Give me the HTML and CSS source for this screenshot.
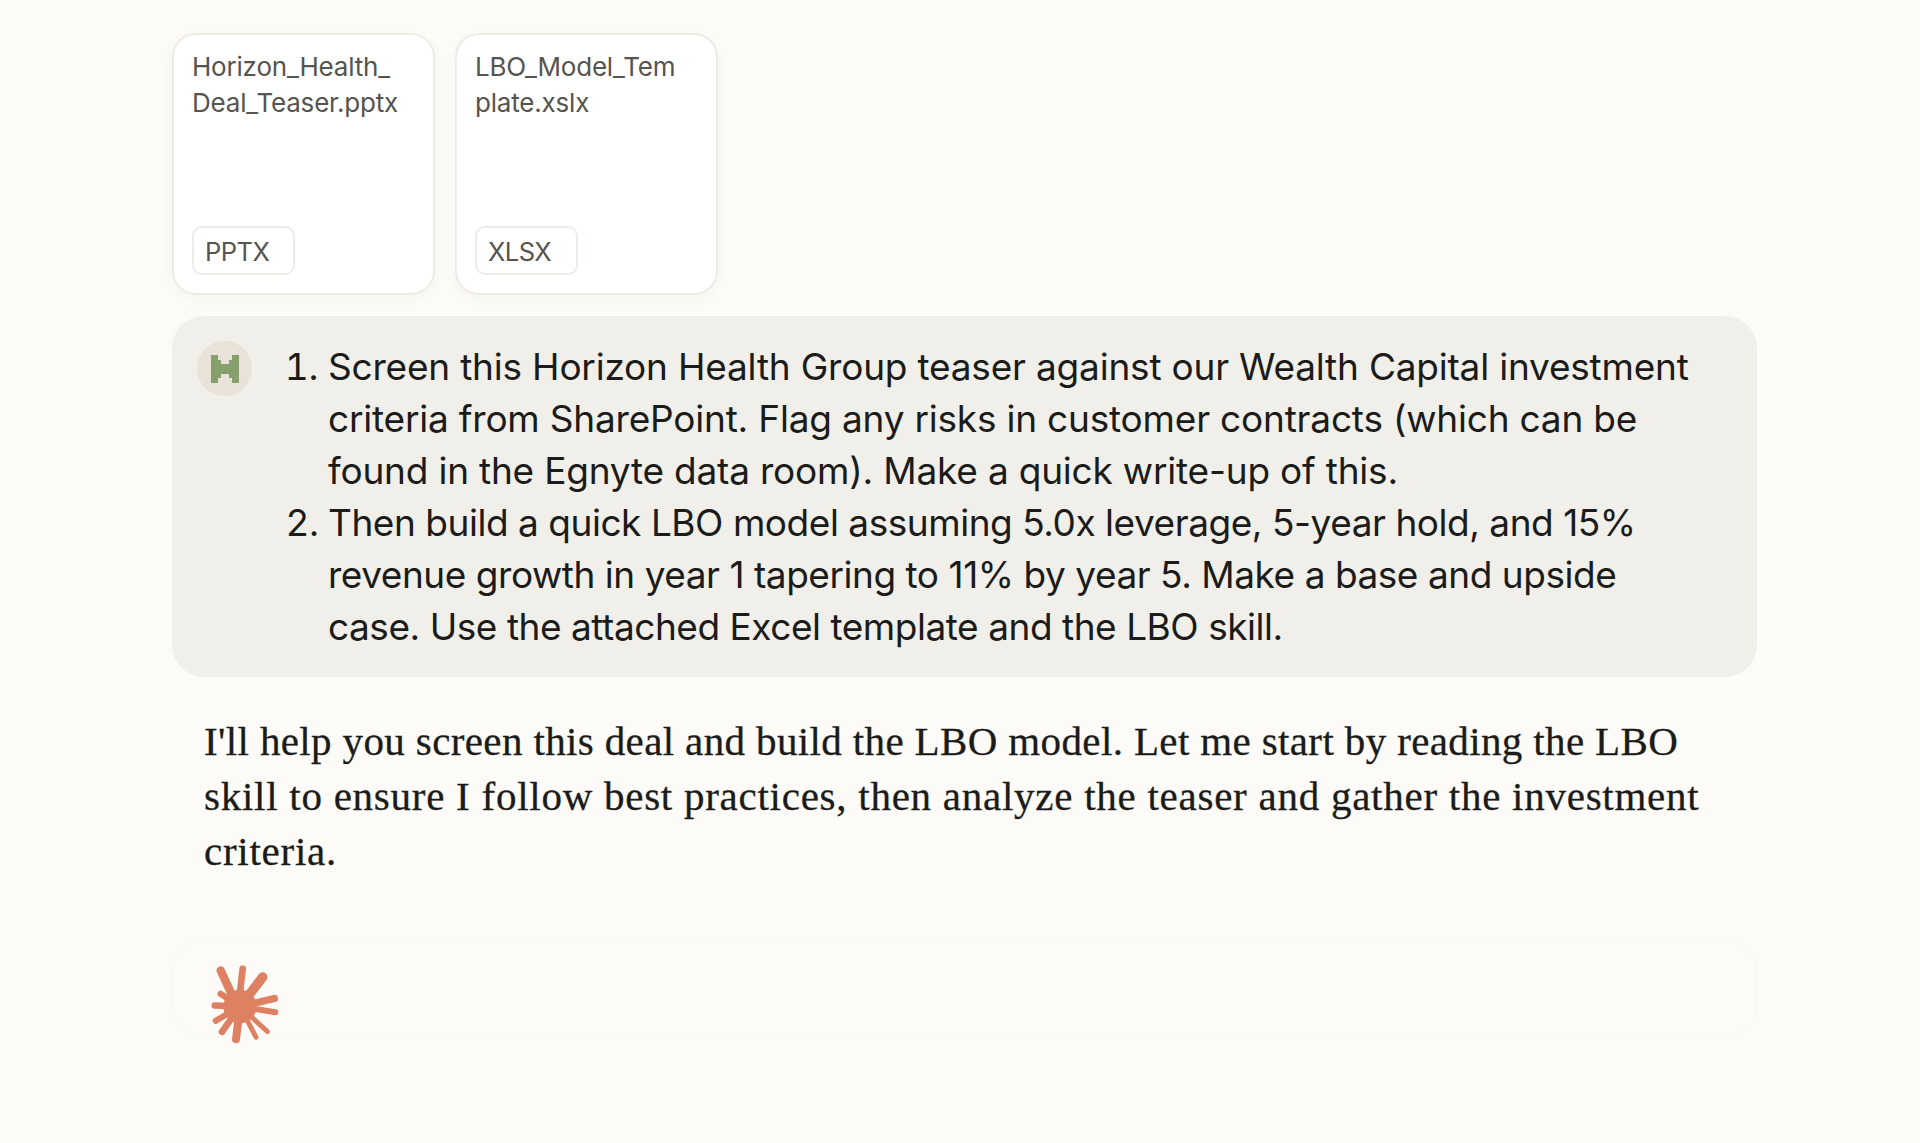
FILE: index.html
```html
<!DOCTYPE html>
<html lang="en">
<head>
<meta charset="utf-8">
<title>Deal screening</title>
<link rel="stylesheet" href="styles.css">
</head>
<body>
<main class="thread">
  <div class="attachments">
    <div class="file-card">
      <div class="file-name">Horizon_Health_<br>Deal_Teaser.pptx</div>
      <span class="file-tag">PPTX</span>
    </div>
    <div class="file-card">
      <div class="file-name">LBO_Model_Tem<br>plate.xslx</div>
      <span class="file-tag">XLSX</span>
    </div>
  </div>
  <section class="user-bubble">
    <div class="avatar">
      <svg class="avatar-icon" viewBox="0 0 28 28"><path d="M0 0h7v5h3v4h8V5h3V0h7v28h-7v-5h-3v-4h-8v4H7v5H0z"/></svg>
    </div>
    <ol class="prompt">
      <li class="item-first">Screen this Horizon Health Group teaser against our Wealth Capital investment criteria from SharePoint. Flag any risks in customer contracts (which can be found in the Egnyte data room). Make a quick write-up of this.</li>
      <li class="item-second">Then build a quick LBO model assuming 5.0x leverage, 5-year hold, and 15% revenue growth in year 1 tapering to 11% by year 5. Make a base and upside case. Use the attached Excel template and the LBO skill.</li>
    </ol>
  </section>
  <p class="reply">I'll help you screen this deal and build the LBO model. Let me start by reading the LBO <span class="reply-wide">skill to ensure I follow best practices, then analyze the teaser and gather the investment criteria.</span></p>
  <div class="status-row">
    <div class="composer-ghost"></div>
    <svg class="spark" viewBox="180 10 210 245" fill="none">
      <circle cx="270" cy="140" r="50" fill="#DE8163"/>
      <g stroke="#DE8163" stroke-linecap="round">
        <path stroke-width="25" d="M262 140 212 32"/>
        <path stroke-width="20" d="M265 140 278 27"/>
        <path stroke-width="29" d="M278 130 338 52"/>
        <path stroke-width="22" d="M270 140 373 116"/>
        <path stroke-width="18" d="M270 140 376 157"/>
        <path stroke-width="15" d="M270 140 352 215"/>
        <path stroke-width="15" d="M270 140 318 232"/>
        <path stroke-width="24" d="M270 140 258 238"/>
        <path stroke-width="20" d="M270 140 216 216"/>
        <path stroke-width="18" d="M270 140 197 183"/>
        <path stroke-width="19" d="M270 140 194 137"/>
        <path stroke-width="19" d="M270 140 212 102"/>
      </g>
    </svg>
  </div>
</main>
</body>
</html>
```

FILE: styles.css
```css
* { box-sizing: border-box; }
html, body { margin: 0; height: 100%; }
body { background: #FCFBF7; color: #1B1B19; overflow: hidden; }
.thread { width: 1585px; margin-left: 172px; padding-top: 33px; }
.attachments { display: flex; gap: 20px; }
.file-card {
  width: 263px; height: 262px; background: #fff; border: 2px solid #EDECE7; border-radius: 24px;
  padding: 14px 18px 18px; display: flex; flex-direction: column; justify-content: space-between; align-items: flex-start;
  box-shadow: 0 4px 14px rgba(60,50,30,.03);
}
.file-name { font: 400 26px/36px Inter, "Liberation Sans", sans-serif; color: #55544F; letter-spacing: -.2px; white-space: nowrap; }
.file-tag {
  width: 103px; height: 49px; border: 2px solid #EDECE7; border-radius: 10px; padding: 6px 11px 0;
  font: 400 25.5px/36px Inter, "Liberation Sans", sans-serif; color: #55544F; letter-spacing: -.55px;
}
.user-bubble {
  margin-top: 21px; height: 361px; background: #F0EFE9; border-radius: 32px; padding: 25px; display: flex;
}
.avatar { width: 55px; height: 55px; flex: none; border-radius: 50%; background: #E8E2D8; display: flex; align-items: center; justify-content: center; }
.avatar-icon { width: 28px; height: 28px; fill: #86A06B; }
.prompt { margin: 0 0 0 76px; padding: 0; width: 1372px; font: 400 37px/52px Inter, "Liberation Sans", sans-serif; color: #1B1B19; }
.item-first { letter-spacing: -.2px; }
.item-second { letter-spacing: -.46px; }
.reply { margin: 37px 0 0 32px; width: 1520px; font: 400 41px/55px "Liberation Serif", serif; letter-spacing: .37px; color: #1B1B19; -webkit-text-stroke: .3px #1B1B19; }
.reply-wide { letter-spacing: .74px; }
.status-row { margin-top: 83px; display: flex; align-items: flex-start; position: relative; }
.spark { width: 70px; height: 82px; margin: 1px 0 0 38px; flex: none; position: relative; }
.composer-ghost { position: absolute; left: 0; right: 0; top: -20px; height: 93px; border: 2px solid #FAF9F5; border-radius: 24px; }
```
